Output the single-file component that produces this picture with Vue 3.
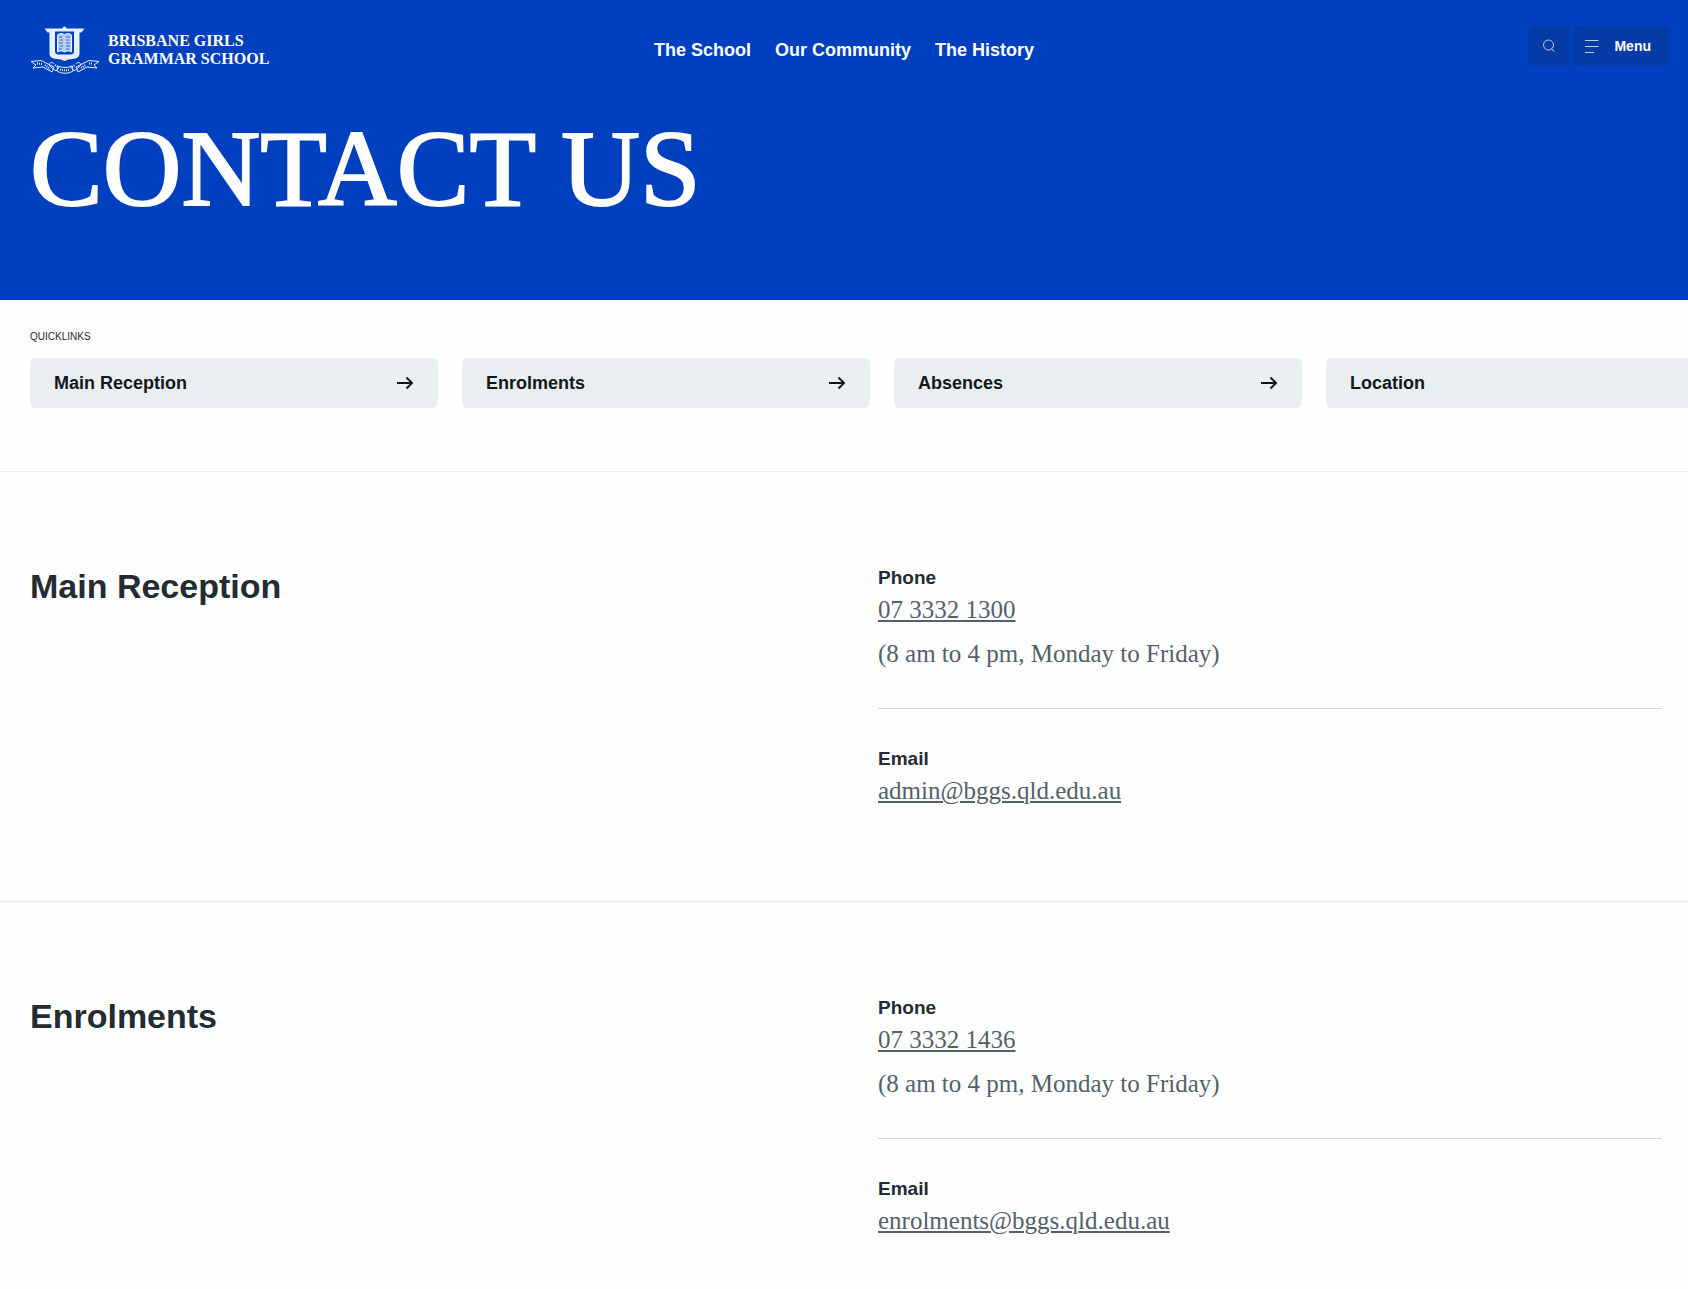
<template>
  <div class="page">
    <header class="hero">
      <div class="top-bar">
        <a href="#" class="logo">
          <svg class="crest" viewBox="0 0 70 48" aria-hidden="true">
            <path class="solid" d="M14.500 2.500h40l-3 4h-2V27.500c0 4-3 5-7 5.500l-4 .500-4 1.500-4-1.500-4-.500c-4-.500-7-1.500-7-5.500V6.500h-2z" />
            <path class="field" d="M25 5.500h19V25c0 3-2 3.500-4.500 3.500h-10C27 28.500 25 28 25 25z" />
            <path class="book" d="M27.500 9c2-2 4.500-2 7-.500 2.500-1.500 5-1.500 7 .500v17c-2-1.500-4.500-1.500-7 0-2.500-1.500-5-1.500-7 0z" />
            <path class="print" d="M29 11h3M36 11h4M30 14h3M36 14h3M29 17h4M36 17h4M30 20h3M36 20h4M29 23h3M36 23h3" />
            <circle class="solid" cx="34.500" cy="2.500" r="2" />
            <path class="ribbon" d="M1 35.500l10-1 13 6.500-2 5-9-5-10 1 3-3zM69 35.500l-10-1-13 6.500 2 5 9-5 10 1-3-3zM24 38c-3-4-7 1-3 3l5 4 4-5M46 38c3-4 7 1 3 3l-5 4-4-5M28 40c4 2 10 2 14 0l1 5c-5 3-11 3-16 0z" />
            <path class="motto" d="M7 37.500l5 .500M15 39l5 4M51 42l5-3M59 37.500l4 0M30 43.500c3 1 7 1 10 0M25 39l3 2M42 41l3-2" />
          </svg>
          <span class="logo-text">BRISBANE GIRLS<br />GRAMMAR SCHOOL</span>
        </a>
        <nav class="main-nav">
          <a v-for="item in navItems" :key="item" href="#">{{ item }}</a>
        </nav>
        <div class="actions">
          <button type="button" class="btn btn-search" aria-label="Search">
            <svg width="14" height="14" viewBox="0 0 14 14" aria-hidden="true">
              <circle cx="6.500" cy="6" r="5" />
              <path d="M9.500 9.500l3 3.500" />
            </svg>
          </button>
          <button type="button" class="btn btn-menu">
            <svg width="14" height="14" viewBox="0 0 14 14" aria-hidden="true">
              <path d="M0 1.500h13.500M0 7.500h13.500M0 13.500h9" />
            </svg>
            <span>Menu</span>
          </button>
        </div>
      </div>
      <h1 class="title">CONTACT US</h1>
    </header>

    <section class="quicklinks">
      <h2 class="quicklinks-label">QUICKLINKS</h2>
      <div class="cards">
        <a v-for="link in quicklinks" :key="link" href="#" class="card">
          <span>{{ link }}</span>
          <svg width="18" height="14" viewBox="0 0 18 14" aria-hidden="true">
            <path d="M1 7h15M10.500 1.500L16 7l-5.500 5.500" />
          </svg>
        </a>
      </div>
    </section>

    <section v-for="contact in contacts" :key="contact.name" class="contact">
      <h2 class="contact-name">{{ contact.name }}</h2>
      <div class="details">
        <div class="detail">
          <h3>Phone</h3>
          <p><a :href="'tel:' + contact.phone">{{ contact.phone }}</a></p>
          <p class="hours">{{ contact.hours }}</p>
        </div>
        <div class="detail">
          <h3>Email</h3>
          <p><a :href="'mailto:' + contact.email">{{ contact.email }}</a></p>
        </div>
      </div>
    </section>
  </div>
</template>

<script setup>
const navItems = ['The School', 'Our Community', 'The History']

const quicklinks = ['Main Reception', 'Enrolments', 'Absences', 'Location']

const contacts = [
  {
    name: 'Main Reception',
    phone: '07 3332 1300',
    hours: '(8 am to 4 pm, Monday to Friday)',
    email: 'admin@bggs.qld.edu.au'
  },
  {
    name: 'Enrolments',
    phone: '07 3332 1436',
    hours: '(8 am to 4 pm, Monday to Friday)',
    email: 'enrolments@bggs.qld.edu.au'
  }
]
</script>

<style>
body {
  background: #fefefe;
}
</style>

<style scoped>
.page {
  overflow: hidden;
  font-family: "Liberation Sans", Arial, sans-serif;
  color: #222c32;
}

h1,
h2,
h3,
p {
  margin: 0;
}

a {
  color: inherit;
  text-decoration: none;
}

/* Hero */
.hero {
  background: #003fbe;
  color: #fff;
  padding: 26px 19px 66px;
}

.top-bar {
  display: grid;
  grid-template-columns: 1fr auto 1fr;
  align-items: start;
}

.logo {
  display: flex;
  align-items: center;
  gap: 8px;
  padding-left: 11px;
}

.crest {
  width: 70px;
  height: 48px;
  fill: none;
  stroke: #e4f0ff;
}

.crest .solid {
  fill: #e4f0ff;
  stroke: none;
}

.crest .field {
  fill: #003fbe;
  stroke: none;
}

.crest .book {
  fill: #b4cdf5;
  stroke-width: 1;
}

.crest .print {
  stroke: #3465c8;
  stroke-width: 1;
}

.crest .ribbon {
  stroke-width: 1;
}

.crest .motto {
  stroke-width: 2;
  stroke-dasharray: 1 1;
}

.logo-text {
  font-family: "Liberation Serif", "Times New Roman", serif;
  font-size: 16px;
  font-weight: 700;
  line-height: 18px;
  white-space: nowrap;
}

.main-nav {
  display: flex;
  gap: 24px;
  padding-top: 12px;
  font-size: 18px;
  font-weight: 700;
  line-height: 24px;
}

.actions {
  display: flex;
  justify-content: flex-end;
  gap: 4px;
}

.btn {
  display: flex;
  align-items: center;
  height: 40px;
  padding: 0 18px 0 12px;
  border: 0;
  border-radius: 5px;
  background: #063aa5;
  color: #fff;
  font-family: inherit;
  font-size: 14px;
  font-weight: 700;
}

.btn svg {
  fill: none;
  stroke: #b9cdf2;
  stroke-width: 1;
}

.btn-search {
  justify-content: center;
  width: 40px;
  padding: 0;
}

.btn-menu {
  gap: 15px;
}

.title {
  padding: 30px 11px 0;
  font-family: "Liberation Serif", "Times New Roman", serif;
  font-size: 109px;
  font-weight: 400;
  line-height: 130px;
  -webkit-text-stroke: 2px #fff;
}

/* Quicklinks */
.quicklinks {
  padding: 31px 0 63px 30px;
}

.quicklinks-label {
  margin-bottom: 15px;
  font-size: 10px;
  font-weight: 400;
  line-height: 12px;
}

.cards {
  display: flex;
  gap: 24px;
}

.card {
  display: flex;
  flex: 0 0 408px;
  align-items: center;
  justify-content: space-between;
  box-sizing: border-box;
  height: 50px;
  padding: 0 24px;
  border-radius: 6px;
  background: #e9eef1;
  color: #12181c;
  font-size: 18px;
  font-weight: 700;
}

.card svg {
  fill: none;
  stroke: #12181c;
  stroke-width: 2;
}

/* Contacts */
.contact {
  display: grid;
  grid-template-columns: 1fr 1fr;
  gap: 64px;
  padding: 94px 26px 92px 30px;
  border-top: 1px solid #ebeded;
}

.contact-name {
  font-size: 34px;
  line-height: 40px;
}

.detail + .detail {
  margin-top: 36px;
  padding-top: 38px;
  border-top: 1px solid #d3d6d8;
}

.detail h3 {
  margin-bottom: 2px;
  font-size: 19px;
  line-height: 24px;
}

.detail p {
  color: #536269;
  font-family: "Liberation Serif", "Times New Roman", serif;
  font-size: 25px;
  line-height: 36px;
}

.detail p a {
  text-decoration: underline;
  text-decoration-thickness: 2px;
  text-underline-offset: 2px;
}

.detail .hours {
  margin-top: 8px;
}

@media (max-width: 800px) {
  .main-nav {
    display: none;
  }

  .contact {
    grid-template-columns: 1fr;
  }
}
</style>
